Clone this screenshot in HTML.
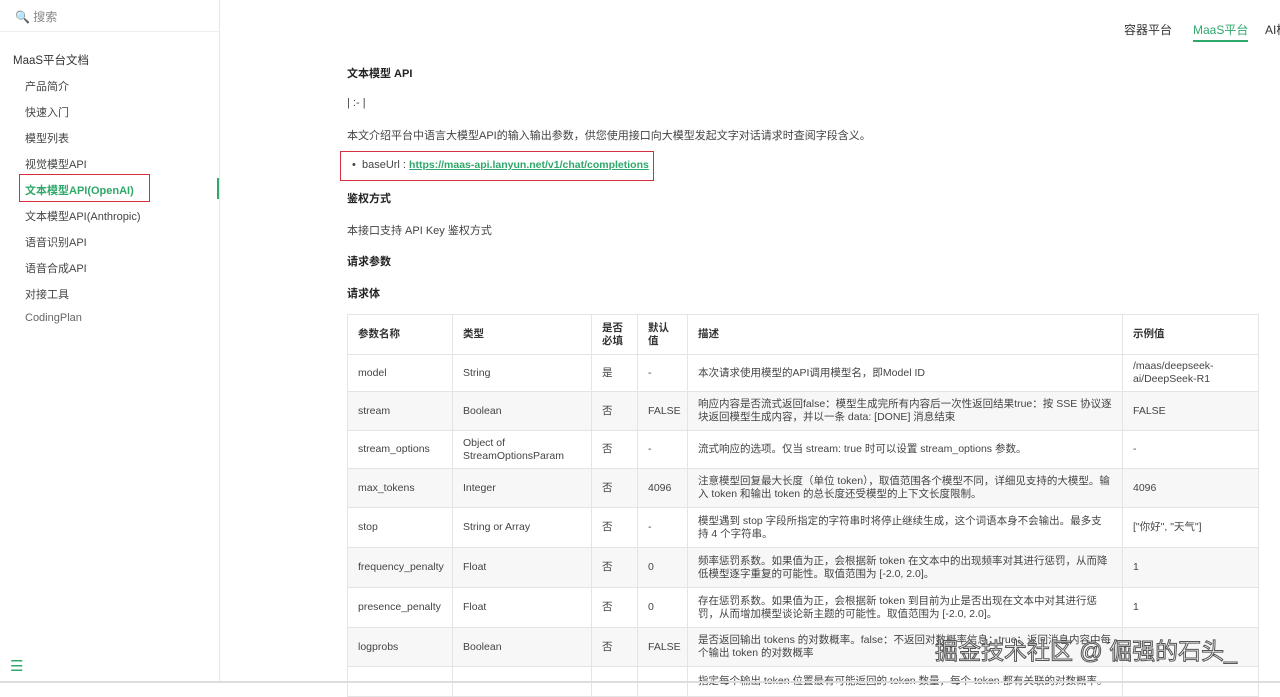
<!DOCTYPE html><html><head><meta charset="utf-8"><style>
*{margin:0;padding:0;box-sizing:border-box}
body{width:1280px;height:683px;overflow:hidden;background:#fff;font-family:"Liberation Sans","Noto Sans CJK SC",sans-serif;color:#333;position:relative}
.sb{position:absolute;left:0;top:0;width:220px;height:681px;border-right:1px solid #e6e6e6}
.search{height:32px;border-bottom:1px solid #eee;font-size:12px;color:#888;padding:8px 0 0 15px}
.t{position:absolute;font-size:11px;color:#444;white-space:nowrap}
table{position:absolute;left:347px;top:314px;width:911px;table-layout:fixed;border-collapse:collapse;font-size:10.5px;color:#444}
td,th{border:1px solid #e4e4e4;padding:0 10px;text-align:left;line-height:13px}
th{font-weight:bold;color:#333;height:40px;background:#fff}
tr:nth-child(odd) td{background:#f7f7f7}
.green{color:#2fa86b}
</style></head><body>
<div class="sb">
<div class="search"><span style="color:#2a7ab0">🔍</span> 搜索</div>
<div class="t" style="left:13px;top:52px;font-size:11.5px;color:#333">MaaS平台文档</div>
<div class="t" style="left:25px;top:78px">产品简介</div>
<div class="t" style="left:25px;top:104px">快速入门</div>
<div class="t" style="left:25px;top:130px">模型列表</div>
<div class="t" style="left:25px;top:156px">视觉模型API</div>
<div style="position:absolute;left:19px;top:174px;width:131px;height:28px;border:1.5px solid #d32f3f"></div>
<div class="t green" style="left:25px;top:182px;font-weight:bold">文本模型API(OpenAI)</div>
<div style="position:absolute;left:217px;top:178px;width:2px;height:21px;background:#2fa86b"></div>
<div class="t" style="left:25px;top:208px">文本模型API(Anthropic)</div>
<div class="t" style="left:25px;top:234px">语音识别API</div>
<div class="t" style="left:25px;top:260px">语音合成API</div>
<div class="t" style="left:25px;top:286px">对接工具</div>
<div class="t" style="left:25px;top:312px;color:#666">CodingPlan</div>
<div class="t green" style="left:10px;top:657px;font-size:15px">☰</div>
</div>
<div style="position:absolute;left:0;top:681px;width:1280px;height:2px;background:#ddd;z-index:2"></div>
<div class="t" style="left:1124px;top:21px;font-size:12px;color:#333">容器平台</div>
<div class="t green" style="left:1193px;top:21px;font-size:12px;border-bottom:2px solid #2fa86b;padding-bottom:2px">MaaS平台</div>
<div class="t" style="left:1265px;top:21px;font-size:12px;color:#333">AI模</div>
<div class="t" style="left:347px;top:65px;font-weight:bold;color:#222">文本模型 API</div>
<div class="t" style="left:347px;top:97px">| :- |</div>
<div class="t" style="left:347px;top:127px">本文介绍平台中语言大模型API的输入输出参数，供您使用接口向大模型发起文字对话请求时查阅字段含义。</div>
<div style="position:absolute;left:340px;top:151px;width:314px;height:30px;border:1.5px solid #d32f3f"></div>
<div class="t" style="left:352px;top:159px">•&nbsp; baseUrl : <a class="green" style="font-weight:bold;text-decoration:underline;font-size:10.5px">https://maas-api.lanyun.net/v1/chat/completions</a></div>
<div class="t" style="left:347px;top:190px;font-weight:bold;color:#222">鉴权方式</div>
<div class="t" style="left:347px;top:222px">本接口支持 API Key 鉴权方式</div>
<div class="t" style="left:347px;top:253px;font-weight:bold;color:#222">请求参数</div>
<div class="t" style="left:347px;top:285px;font-weight:bold;color:#222">请求体</div>
<table>
<colgroup><col style="width:105px"><col style="width:139px"><col style="width:46px"><col style="width:50px"><col style="width:435px"><col style="width:136px"></colgroup>
<tr><th>参数名称</th><th>类型</th><th>是否<br>必填</th><th>默认<br>值</th><th>描述</th><th>示例值</th></tr>
<tr style="height:37px"><td>model</td><td>String</td><td>是</td><td>-</td><td>本次请求使用模型的API调用模型名，即Model ID</td><td>/maas/deepseek-<br>ai/DeepSeek-R1</td></tr>
<tr style="height:39px"><td>stream</td><td>Boolean</td><td>否</td><td>FALSE</td><td>响应内容是否流式返回false：模型生成完所有内容后一次性返回结果true：按 SSE 协议逐块返回模型生成内容，并以一条 data: [DONE] 消息结束</td><td>FALSE</td></tr>
<tr style="height:38px"><td>stream_options</td><td>Object of<br>StreamOptionsParam</td><td>否</td><td>-</td><td>流式响应的选项。仅当 stream: true 时可以设置 stream_options 参数。</td><td>-</td></tr>
<tr style="height:39px"><td>max_tokens</td><td>Integer</td><td>否</td><td>4096</td><td>注意模型回复最大长度（单位 token），取值范围各个模型不同，详细见支持的大模型。输入 token 和输出 token 的总长度还受模型的上下文长度限制。</td><td>4096</td></tr>
<tr style="height:40px"><td>stop</td><td>String or Array</td><td>否</td><td>-</td><td>模型遇到 stop 字段所指定的字符串时将停止继续生成，这个词语本身不会输出。最多支持 4 个字符串。</td><td>["你好", "天气"]</td></tr>
<tr style="height:40px"><td>frequency_penalty</td><td>Float</td><td>否</td><td>0</td><td>频率惩罚系数。如果值为正，会根据新 token 在文本中的出现频率对其进行惩罚，从而降低模型逐字重复的可能性。取值范围为 [-2.0, 2.0]。</td><td>1</td></tr>
<tr style="height:40px"><td>presence_penalty</td><td>Float</td><td>否</td><td>0</td><td>存在惩罚系数。如果值为正，会根据新 token 到目前为止是否出现在文本中对其进行惩罚，从而增加模型谈论新主题的可能性。取值范围为 [-2.0, 2.0]。</td><td>1</td></tr>
<tr style="height:39px"><td>logprobs</td><td>Boolean</td><td>否</td><td>FALSE</td><td>是否返回输出 tokens 的对数概率。false：不返回对数概率信息；true：返回消息内容中每个输出 token 的对数概率</td><td></td></tr>
<tr style="height:30px"><td></td><td></td><td></td><td></td><td>指定每个输出 token 位置最有可能返回的 token 数量，每个 token 都有关联的对数概率。</td><td></td></tr>
</table>
<div style="position:absolute;left:935px;top:632px;font-size:23px;color:#fff;-webkit-text-stroke:1px #555;white-space:nowrap">掘金技术社区 @ 倔强的石头_</div>
</body></html>
